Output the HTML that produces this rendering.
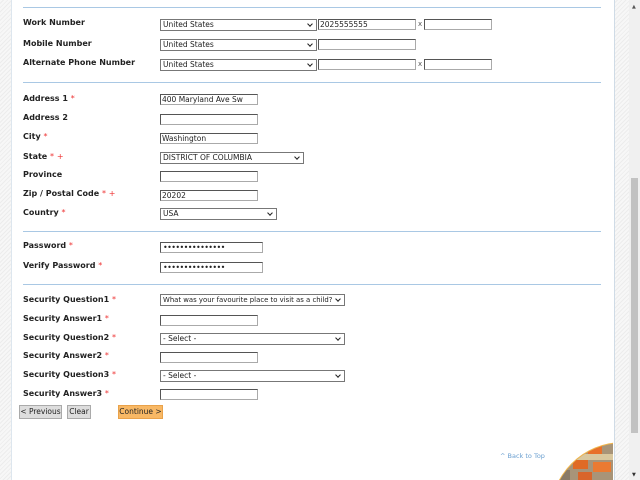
<!DOCTYPE html>
<html><head><style>
html,body{margin:0;width:640px;height:480px;overflow:hidden;}
body{position:relative;background:#f4f4f4;font-family:"DejaVu Sans","Liberation Sans",sans-serif;}
.hatch{position:absolute;top:0;bottom:0;background:repeating-linear-gradient(135deg,#f7f7f7 0 2px,#ececec 2px 3px);}
#main{position:absolute;left:11px;top:0;width:602px;height:480px;background:#fff;border-left:1px solid #dde6ee;border-right:1px solid #cfdbe6;}
.hr{position:absolute;left:23px;width:578px;height:1px;background:#a9c8e4;}
.l{position:absolute;left:23px;font-size:8px;font-weight:bold;color:#222;white-space:nowrap;}
.l i{color:#e33;font-style:normal;font-weight:normal;}
.s{position:absolute;height:10px;border:1px solid #777;background:#fff;font-size:7.5px;line-height:10px;padding-left:2px;box-sizing:content-box;color:#222;white-space:nowrap;overflow:hidden;}
.s:after{content:"";position:absolute;right:4px;top:2px;width:3px;height:3px;border-right:1.3px solid #222;border-bottom:1.3px solid #222;transform:rotate(45deg);background:#fff;}
.t{position:absolute;height:9px;border:1px solid #555;border-right-color:#aaa;border-bottom-color:#aaa;background:#fff;font-size:7.5px;line-height:9px;padding-left:1px;color:#222;white-space:nowrap;overflow:hidden;}
.x{position:absolute;font-size:7px;color:#555;}
.b{position:absolute;top:405px;height:12px;font-size:7.5px;line-height:12px;text-align:center;background:#ddd;border:1px solid #aaa;color:#222;white-space:nowrap;}
.p{font-size:8px;letter-spacing:-0.6px;padding-left:2px;}
</style></head><body>
<div class="hatch" style="left:0;width:11px"></div>
<div class="hatch" style="left:614px;width:15px"></div>
<div style="position:absolute;left:629px;top:0;width:11px;height:480px;background:#f0f0f0"></div>
<div style="position:absolute;left:631px;top:178px;width:7px;height:255px;background:#c2c2c2"></div>
<div style="position:absolute;left:632px;top:4px;font-size:5px;color:#555">▲</div>
<div style="position:absolute;left:632px;top:472px;font-size:5px;color:#333">▼</div>
<div id="main"></div>
<div class="hr" style="top:7px"></div>
<div class="hr" style="top:82px"></div>
<div class="hr" style="top:231px"></div>
<div class="hr" style="top:284px"></div>

<div class="l" style="top:18px">Work Number</div>
<div class="s" style="left:160px;top:19px;width:153px">United States</div>
<div class="t" style="left:318px;top:19px;width:95px">2025555555</div>
<div class="x" style="left:418px;top:20px">x</div>
<div class="t" style="left:424px;top:19px;width:65px"></div>

<div class="l" style="top:39px">Mobile Number</div>
<div class="s" style="left:160px;top:39px;width:153px">United States</div>
<div class="t" style="left:318px;top:39px;width:95px"></div>

<div class="l" style="top:58px">Alternate Phone Number</div>
<div class="s" style="left:160px;top:59px;width:153px">United States</div>
<div class="t" style="left:318px;top:59px;width:95px"></div>
<div class="x" style="left:418px;top:60px">x</div>
<div class="t" style="left:424px;top:59px;width:65px"></div>

<div class="l" style="top:94px">Address 1 <i>*</i></div>
<div class="t" style="left:160px;top:94px;width:95px">400 Maryland Ave Sw</div>
<div class="l" style="top:113px">Address 2</div>
<div class="t" style="left:160px;top:114px;width:95px"></div>
<div class="l" style="top:132px">City <i>*</i></div>
<div class="t" style="left:160px;top:133px;width:95px">Washington</div>
<div class="l" style="top:152px">State <i>*</i> <i>+</i></div>
<div class="s" style="left:160px;top:152px;width:140px">DISTRICT OF COLUMBIA</div>
<div class="l" style="top:170px">Province</div>
<div class="t" style="left:160px;top:171px;width:95px"></div>
<div class="l" style="top:189px">Zip / Postal Code <i>*</i> <i>+</i></div>
<div class="t" style="left:160px;top:190px;width:95px">20202</div>
<div class="l" style="top:208px">Country <i>*</i></div>
<div class="s" style="left:160px;top:208px;width:113px">USA</div>

<div class="l" style="top:241px">Password <i>*</i></div>
<div class="t p" style="left:160px;top:242px;width:99px">•••••••••••••••</div>
<div class="l" style="top:261px">Verify Password <i>*</i></div>
<div class="t p" style="left:160px;top:262px;width:99px">•••••••••••••••</div>

<div class="l" style="top:295px">Security Question1 <i>*</i></div>
<div class="s" style="left:160px;top:294px;width:181px;font-size:6.9px">What was your favourite place to visit as a child?</div>
<div class="l" style="top:314px">Security Answer1 <i>*</i></div>
<div class="t" style="left:160px;top:315px;width:95px"></div>
<div class="l" style="top:333px">Security Question2 <i>*</i></div>
<div class="s" style="left:160px;top:333px;width:181px">- Select -</div>
<div class="l" style="top:351px">Security Answer2 <i>*</i></div>
<div class="t" style="left:160px;top:352px;width:95px"></div>
<div class="l" style="top:370px">Security Question3 <i>*</i></div>
<div class="s" style="left:160px;top:370px;width:181px">- Select -</div>
<div class="l" style="top:389px">Security Answer3 <i>*</i></div>
<div class="t" style="left:160px;top:389px;width:95px"></div>

<div class="b" style="left:19px;width:41px">&lt; Previous</div>
<div class="b" style="left:67px;width:22px">Clear</div>
<div class="b" style="left:118px;width:43px;background:#f8b865;border-color:#e9a24a">Continue &gt;</div>

<div style="position:absolute;left:500px;top:452px;font-size:6.5px;color:#6a9fd0">^ Back to Top</div>
<svg style="position:absolute;left:548px;top:440px" width="65" height="40">
<defs><clipPath id="c"><circle cx="75" cy="75" r="72"/></clipPath></defs>
<circle cx="75" cy="75" r="73" fill="#f2b54a"/>
<g clip-path="url(#c)">
<rect x="0" y="0" width="65" height="40" fill="#a89478"/>
<rect x="20" y="14" width="45" height="6" fill="#d9c79e"/>
<rect x="40" y="6" width="14" height="8" fill="#e8702a"/>
<rect x="25" y="20" width="15" height="9" fill="#e06a25"/>
<rect x="45" y="22" width="18" height="10" fill="#ea7a32"/>
<rect x="30" y="32" width="14" height="8" fill="#d9652a"/>
<rect x="10" y="30" width="12" height="10" fill="#8a7a66"/>
</g></svg>
</body></html>
